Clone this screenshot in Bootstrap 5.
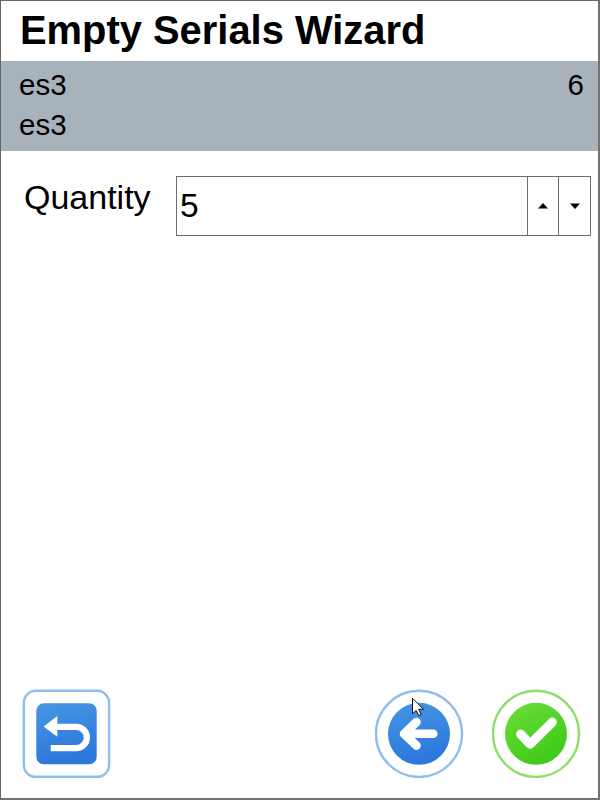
<!DOCTYPE html>
<html lang="en">
<head>
<meta charset="utf-8">
<meta name="viewport" content="width=device-width, initial-scale=1">
<title>Empty Serials Wizard</title>
<link rel="stylesheet" href="https://cdn.jsdelivr.net/npm/bootstrap@5.3.0/dist/css/bootstrap.min.css">
<style>
body { font-family: "Liberation Sans", Arial, sans-serif; color: #000; background: #fff; }
.wizard { height: 800px; border: 1px solid #666; border-right-width: 2px; border-bottom-width: 2px; border-right-color: #727272; border-bottom-color: #727272; }
.wizard-title { height: 60px; font-size: 39.9px; line-height: 58px; padding-left: 19px; }
.summary { height: 90px; background: #a8b2ba; font-size: 29.5px; line-height: 40px; padding: 4px 14px 0 18px; }
.qty-row { padding: 25px 7px 0 23px; }
.qty-label { width: 152px; font-size: 34px; line-height: 42px; }
.qty-group { height: 60px; border: 1px solid #6e6e6e; }
.qty-group .form-control { font-size: 33.5px; padding: 1px 0 0 3px; color: #000; box-shadow: none; }
.spin { width: 31px; border-left: 1px solid #6e6e6e !important; }
.spin + .spin { width: 32px; }
.actions { padding: 0 17px 20px 21px; }
.actions svg { display: block; }
.gap-actions { gap: 28px; }
.pointer { left: 37px; top: 8px; }
</style>
</head>
<body>
<main class="wizard d-flex flex-column">
  <h1 class="wizard-title fw-bold m-0">Empty Serials Wizard</h1>
  <section class="summary d-flex justify-content-between">
    <div><div>es3</div><div>es3</div></div>
    <div>6</div>
  </section>
  <section class="qty-row d-flex">
    <label class="qty-label flex-shrink-0" for="qty">Quantity</label>
    <div class="qty-group d-flex flex-grow-1">
      <input id="qty" class="form-control border-0 rounded-0" type="text" value="5">
      <button class="spin btn border-0 rounded-0 p-0 d-flex align-items-center justify-content-center flex-shrink-0" type="button" aria-label="Increase"><svg width="10" height="6" viewBox="0 0 10 6"><path d="M0 5.5 5 0l5 5.5z"/></svg></button>
      <button class="spin btn border-0 rounded-0 p-0 d-flex align-items-center justify-content-center flex-shrink-0" type="button" aria-label="Decrease"><svg width="10" height="6" viewBox="0 0 10 6"><path d="M0 .5h10L5 6z"/></svg></button>
    </div>
  </section>
  <footer class="actions d-flex justify-content-between mt-auto">
    <button class="btn border-0 p-0" type="button" aria-label="Return">
      <svg width="89" height="89" viewBox="0 0 89 89">
        <defs><linearGradient id="blue" x1="0" y1="0" x2=".25" y2="1"><stop offset="0" stop-color="#4696e5"/><stop offset="1" stop-color="#2c78db"/></linearGradient></defs>
        <rect x="1.8" y="1.8" width="85.3" height="86" rx="12" fill="#fff" stroke="#8dbeee" stroke-width="2.4"/>
        <rect x="14.3" y="14.3" width="60.4" height="61" rx="7.5" fill="url(#blue)"/>
        <path d="M32 37.8H54.2a10.7 10.7 0 0 1 0 21.4H28.7" fill="none" stroke="#fff" stroke-width="6.3"/>
        <path d="M21.6 37.5 35.3 27v20.8z" fill="#fff"/>
      </svg>
    </button>
    <div class="d-flex gap-actions">
      <button class="btn border-0 p-0 position-relative" type="button" aria-label="Back">
        <svg width="89" height="89" viewBox="0 0 89 89">
          <circle cx="44" cy="44.8" r="43.1" fill="#fff" stroke="#8dbeee" stroke-width="2.4"/>
          <circle cx="44" cy="44.8" r="31" fill="url(#blue)"/>
          <path d="M41.5 33 29 44.8l12.5 11.8M30 44.8H58.3" fill="none" stroke="#fff" stroke-width="8.6" stroke-linecap="round" stroke-linejoin="round"/>
        </svg>
        <svg class="pointer position-absolute" width="13" height="20" viewBox="0 0 13 20"><path d="M.5 1.2v15.6l3.6-3.4 2.7 5.3 2.4-1.1-2.5-5.3h4.8z" fill="#fff" stroke="#111" stroke-width="1"/></svg>
      </button>
      <button class="btn border-0 p-0" type="button" aria-label="Confirm">
        <svg width="89" height="89" viewBox="0 0 89 89">
          <defs><linearGradient id="green" x1=".1" y1="0" x2=".75" y2="1"><stop offset="0" stop-color="#6bdc3b"/><stop offset="1" stop-color="#3cc916"/></linearGradient></defs>
          <circle cx="44" cy="44.8" r="43.1" fill="#fff" stroke="#8ae069" stroke-width="2.4"/>
          <circle cx="44" cy="44.8" r="31" fill="url(#green)"/>
          <path d="M28.7 45.2 38 55.2 60.3 33.2" fill="none" stroke="#fff" stroke-width="9.2" stroke-linecap="round" stroke-linejoin="round"/>
        </svg>
      </button>
    </div>
  </footer>
</main>
<script src="https://cdn.jsdelivr.net/npm/bootstrap@5.3.0/dist/js/bootstrap.bundle.min.js"></script>
</body>
</html>
